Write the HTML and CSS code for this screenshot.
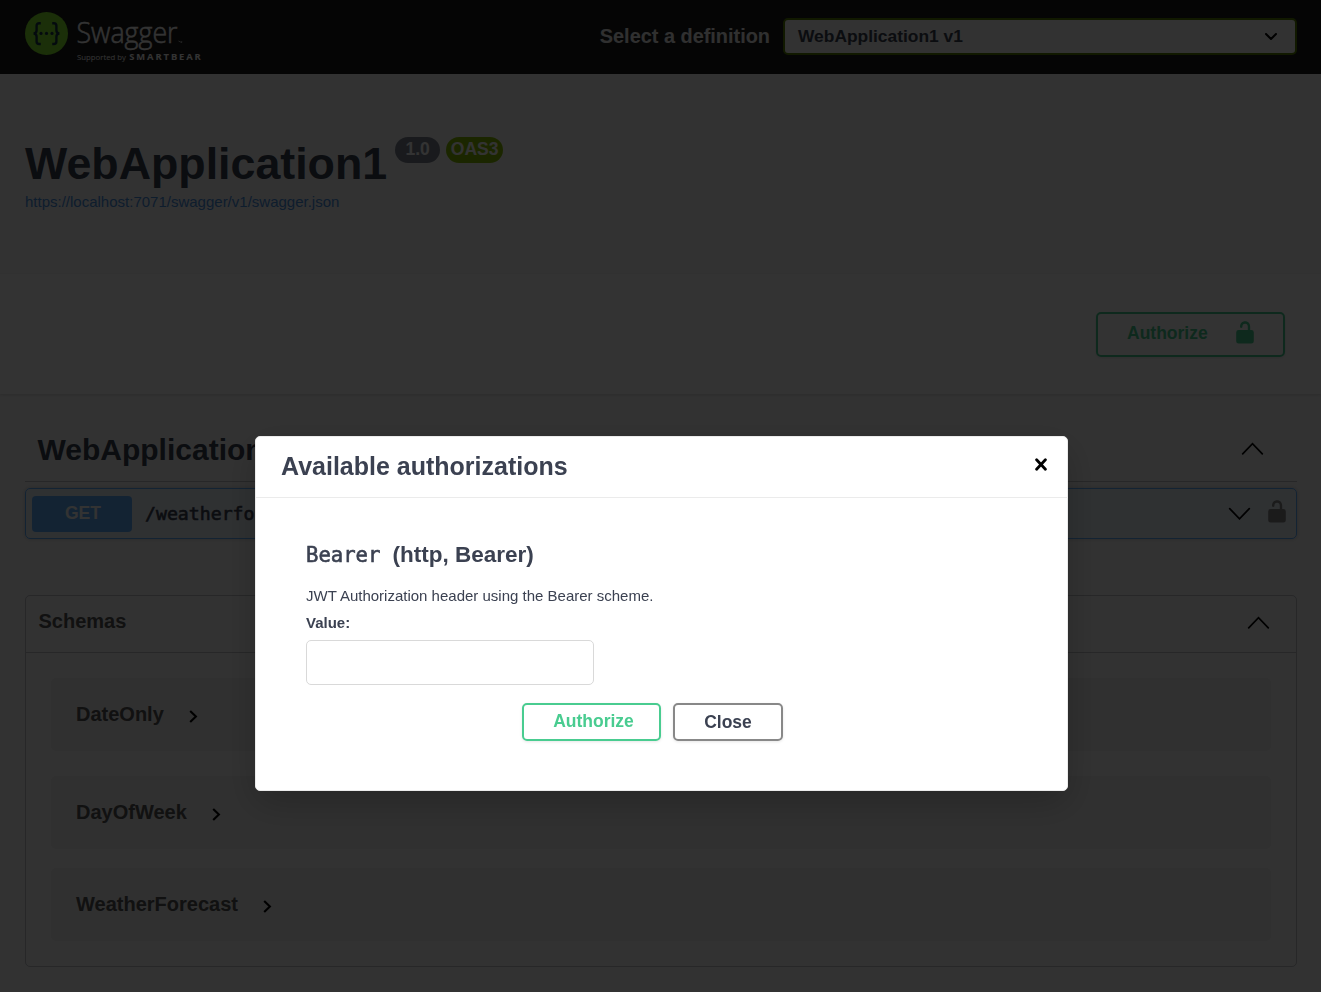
FILE: index.html
```html
<!DOCTYPE html>
<html lang="en">
<head>
<meta charset="utf-8">
<title>Swagger UI</title>
<link rel="stylesheet" href="styles.css">
</head>
<body>
<header class="topbar">
  <svg class="logo" width="180" height="60" viewBox="0 0 180 60">
    <circle cx="21.5" cy="27.5" r="21.5" fill="#85ea2d"/>
    <g fill="none" stroke="#173647" stroke-width="2.4">
      <path d="M15.8 17.2h-1.6q-2.6 0-2.6 2.6v4.4q0 3.1-3 3.3q3 .2 3 3.3v4.6q0 2.6 2.6 2.6h1.6"/>
      <path d="M27.2 17.2h1.6q2.6 0 2.6 2.6v4.4q0 3.1 3 3.3q-3 .2-3 3.3v4.6q0 2.6-2.6 2.6h-1.6"/>
    </g>
    <g fill="#173647"><circle cx="16" cy="27.4" r="1.6"/><circle cx="21.5" cy="27.4" r="1.6"/><circle cx="27" cy="27.4" r="1.6"/></g>
    <text class="logo-name" x="51.5" y="36.8" textLength="101" lengthAdjust="spacingAndGlyphs">Swagger</text>
    <path d="M153.5 35l3.2 1.6v-1.6" stroke="#fff" stroke-opacity=".6" fill="none"/>
    <text class="logo-by" x="52" y="54" textLength="49" lengthAdjust="spacingAndGlyphs">Supported by</text>
    <text class="logo-brand" x="104.3" y="54" textLength="71.5">SMARTBEAR</text>
  </svg>
  <div class="definition">
    <span class="definition-label">Select a definition</span>
    <div class="select"><span>WebApplication1 v1</span>
      <svg width="12" height="8" viewBox="0 0 12 8"><path d="M1 1l5 5 5-5" fill="none" stroke="#000" stroke-width="2" stroke-linecap="round" stroke-linejoin="round"/></svg>
    </div>
  </div>
</header>
<section class="info">
  <div class="title-row"><h1 class="title">WebApplication1</h1><span class="badge version">1.0</span><span class="badge oas">OAS3</span></div>
  <a class="url">https://localhost:7071/swagger/v1/swagger.json</a>
</section>
<section class="schemes">
  <button class="btn authorize open-auth"><span>Authorize</span>
    <svg width="18" height="24" viewBox="0 0 18 24"><path d="M2.6 9H11.8V5.8C11.8 3.9 10.9 2.8 9.1 2.8S6.4 3.9 6.4 5.8V6.2Q5.2 7.6 4 6.2V5.8C4 2.5 6.1.3 9.1.3S14.2 2.5 14.2 5.8V9h1.2q2.4 0 2.4 2.4v8.8q0 2.4-2.4 2.4H2.6Q.2 22.6.2 20.2v-8.8Q.2 9 2.6 9Z" fill="#49cc90"/></svg>
  </button>
</section>
<main class="content">
  <div class="tag"><h2 class="tag-name">WebApplication1</h2>
    <svg class="chevron" width="23" height="13" viewBox="0 0 23 13"><path d="M1.7 11.8L11.5 1.7l9.8 10.1" /></svg>
  </div>
  <div class="opblock">
    <span class="method">GET</span><span class="path">/weatherforecast</span>
    <svg class="chevron" width="23" height="13" viewBox="0 0 23 13"><path d="M1.7 1.7l9.8 10.1L21.3 1.7"/></svg>
    <svg class="op-lock" width="18" height="24" viewBox="0 0 18 24"><path d="M2.6 9H11.8V5.8C11.8 3.9 10.9 2.8 9.1 2.8S6.4 3.9 6.4 5.8V6.2Q5.2 7.6 4 6.2V5.8C4 2.5 6.1.3 9.1.3S14.2 2.5 14.2 5.8V9h1.2q2.4 0 2.4 2.4v8.8q0 2.4-2.4 2.4H2.6Q.2 22.6.2 20.2v-8.8Q.2 9 2.6 9Z"/></svg>
  </div>
  <div class="models">
    <div class="models-head"><h3 class="models-title">Schemas</h3>
      <svg class="chevron" width="23" height="13" viewBox="0 0 23 13"><path d="M1.7 11.8L11.5 1.7l9.8 10.1"/></svg>
    </div>
    <div class="model"><span>DateOnly</span><svg width="9" height="13" viewBox="0 0 9 13"><path d="M1.2 1l5.7 5.5L1.2 12"/></svg></div>
    <div class="model"><span>DayOfWeek</span><svg width="9" height="13" viewBox="0 0 9 13"><path d="M1.2 1l5.7 5.5L1.2 12"/></svg></div>
    <div class="model last"><span>WeatherForecast</span><svg width="9" height="13" viewBox="0 0 9 13"><path d="M1.2 1l5.7 5.5L1.2 12"/></svg></div>
  </div>
</main>
<div class="backdrop"></div>
<div class="modal" role="dialog">
  <div class="modal-head"><h3 class="modal-title">Available authorizations</h3>
    <svg width="12" height="13" viewBox="0 0 12 13"><path d="M1.6 1.7l8.8 9.6M10.4 1.7l-8.8 9.6" stroke="#000" stroke-width="2.8" stroke-linecap="round"/></svg>
  </div>
  <div class="modal-body">
    <h4 class="auth-name"><code>Bearer</code><span>(http, Bearer)</span></h4>
    <p class="auth-desc">JWT Authorization header using the Bearer scheme.</p>
    <label class="auth-label" for="value">Value:</label>
    <input class="auth-input" id="value" type="text">
    <div class="actions"><button class="btn authorize">Authorize</button><button class="btn close">Close</button></div>
  </div>
</div>
</body>
</html>
```
FILE: styles.css
```css
* { box-sizing: border-box; }
html, body { height: 100%; overflow: hidden; }
body { margin: 0; background: #fafafa; color: #3b4151; font-family: "Liberation Sans", Arial, sans-serif; }
h1, h2, h3, h4, p { margin: 0; }
svg { display: block; flex: none; }

.topbar { height: 74px; background: #1b1b1b; padding: 6px 24px 0 25px; display: flex; justify-content: space-between; }
.logo-name { font: 300 28.5px "Open Sans", sans-serif; fill: #fff; stroke: #fff; stroke-width: .5px; }
.logo-by { font: 400 7.5px "Open Sans", sans-serif; fill: #fff; }
.logo-brand { font: 700 9.4px "Open Sans", sans-serif; fill: #fff; }
.definition { display: flex; align-items: flex-start; gap: 13px; padding-top: 12px; }
.definition-label { font-size: 19.9px; font-weight: 700; line-height: 36px; color: #f0f0f0; }
.select { width: 514px; height: 37px; border: 2px solid #547f00; border-radius: 5px; background: #f7f7f7; display: flex; align-items: center; justify-content: space-between; padding: 0 18px 0 13px; font-size: 17.4px; font-weight: 700; line-height: 30px; }
.select span { padding-bottom: 2px; }

.info { height: 200px; padding: 63px 25px 0; }
.title-row { display: flex; align-items: flex-start; height: 50px; }
.title { font-size: 44.75px; line-height: 52px; }
.badge { height: 26px; border-radius: 13px; color: #fff; font-size: 17.5px; font-weight: 700; line-height: 24px; text-align: center; }
.version { width: 45px; margin-left: 8px; background: #7d8492; }
.oas { width: 57px; margin-left: 6px; background: #89bf04; }
.url { display: block; margin-top: 5px; font-size: 15px; line-height: 20px; color: #4990e2; }

.schemes { height: 120px; background: #fff; box-shadow: 0 1px 3px rgba(0,0,0,.15); display: flex; justify-content: flex-end; align-items: flex-start; padding: 38px 36px 0; }
.btn { font: 700 17.5px "Liberation Sans", Arial, sans-serif; border: 2px solid #888; border-radius: 5px; background: transparent; color: #3b4151; box-shadow: 0 1px 3px rgba(0,0,0,.1); height: 38px; padding: 0; }
.authorize { border-color: #49cc90; color: #49cc90; }
.open-auth { width: 189px; height: 45px; display: flex; justify-content: space-between; align-items: flex-start; padding: 7px 29px 0 29px; }
.open-auth span { line-height: 24px; }

.content { padding: 26px 24px 0 25px; }
.tag { height: 62px; padding: 11px 33px 0 12.5px; display: flex; justify-content: space-between; border-bottom: 1px solid rgba(59,65,81,.3); }
.tag-name { font-size: 30px; line-height: 38px; }
.tag .chevron { margin-top: 11px; }
.chevron path { fill: none; stroke: #000; stroke-width: 1.7; stroke-linecap: round; }
.opblock { margin-top: 6px; height: 51px; border: 1px solid #61affe; border-radius: 5px; background: rgba(97,175,254,.1); box-shadow: 0 0 4px rgba(0,0,0,.19); display: flex; align-items: center; padding: 0 10px 0 6px; }
.method { width: 100px; height: 36px; border-radius: 4px; background: #61affe; color: #fff; font-size: 17.5px; font-weight: 700; line-height: 34px; text-align: center; padding-left: 2px; }
.path { flex: 1; margin-left: 13px; font: 400 18.2px "DejaVu Sans Mono", monospace; -webkit-text-stroke: .6px #3b4151; }
.op-lock { margin-left: 17px; margin-bottom: 3px; }
.op-lock path { fill: #888; }

.models { margin-top: 56px; height: 372px; border: 1px solid rgba(59,65,81,.3); border-radius: 5px; color: #555; font-size: 20px; font-weight: 700; }
.models-head { height: 57px; border-bottom: 1px solid rgba(59,65,81,.3); display: flex; justify-content: space-between; padding: 13px 26px 0 12.5px; }
.models-title { font-size: 20px; line-height: 24px; }
.models-head .chevron { margin-top: 7px; }
.model { height: 73px; margin: 25px 25px 0; border-radius: 5px; background: rgba(0,0,0,.05); display: flex; align-items: flex-start; padding: 24px 25px 0; gap: 25px; line-height: 24px; }
.model svg { margin-top: 8px; }
.model path { fill: none; stroke: #000; stroke-width: 2.1; }
.model.last { margin-top: 19px; }

.backdrop { position: fixed; inset: 0; background: rgba(0,0,0,.8); }
.modal { position: fixed; left: 255px; top: 436px; width: 813px; height: 355px; border: 1px solid #ebebeb; border-radius: 5px; background: #fff; box-shadow: 0 12px 37px rgba(0,0,0,.2); }
.modal-head { height: 61px; border-bottom: 1px solid #ebebeb; display: flex; justify-content: space-between; padding: 14px 20px 0 25px; }
.modal-title { font-size: 25px; line-height: 30px; }
.modal-head svg { margin-top: 7px; }
.modal-body { padding: 43px 50px 0; display: flex; flex-direction: column; }
.auth-name { display: flex; align-items: baseline; font-size: 22.5px; line-height: 28px; }
.auth-name code { width: 86.5px; font: 400 20.6px "DejaVu Sans Mono", monospace; -webkit-text-stroke: .6px #3b4151; }
.auth-desc { margin-top: 17px; font-size: 15px; line-height: 20px; }
.auth-label { margin-top: 7px; font-size: 15px; font-weight: 700; line-height: 20px; }
.auth-input { margin-top: 7px; width: 288px; height: 45px; border: 1px solid #d9d9d9; border-radius: 5px; background: #fff; }
.actions { margin: 18px 0 0 216px; display: flex; gap: 12px; }
.actions .authorize { width: 139px; padding: 0 0 2px 4px; }
.actions .close { width: 110px; }
```
